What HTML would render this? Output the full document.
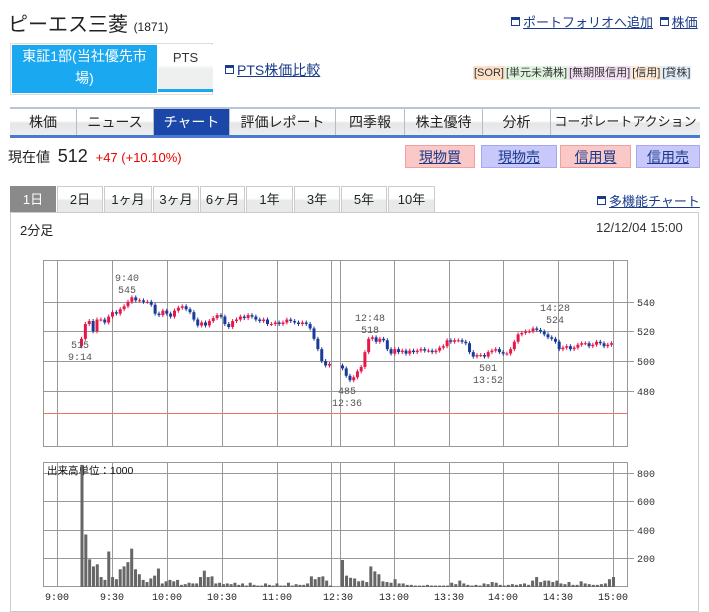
<!DOCTYPE html>
<html><head><meta charset="utf-8"><style>
body{margin:0;width:709px;height:605px;overflow:hidden;background:#fff;font-family:"Liberation Sans","Noto Sans CJK JP",sans-serif;color:#222;position:relative}
.a{position:absolute;white-space:nowrap}
a{color:#1a3a8a;text-decoration:underline}
.ic{display:inline-block;width:7px;height:7px;border:1px solid #1a3a8a;margin-right:3px;vertical-align:1px;background:linear-gradient(#1a3a8a 2px,#fff 2px)}
.nav{position:absolute;top:107px;left:10px;width:690px;height:26px;border-top:2px solid #b8c4d8;border-bottom:3px solid #4a7ad0;display:flex}
.nav div{flex:none;height:26px;line-height:26px;text-align:center;font-size:14px;background:linear-gradient(#fff 0,#fff 45%,#e4e6e8 55%,#eceeef 100%);border-right:1px solid #b8bcc4;box-sizing:border-box;color:#222;overflow:hidden;white-space:nowrap}
.nav .on{background:#1b48a8;color:#fff}
.btn{position:absolute;top:145px;height:23px;line-height:23px;text-align:center;font-size:14px;box-sizing:border-box}
.pk{background:#fbc8c8;border:1px solid #f0a0a0}
.lv{background:#c8c8fb;border:1px solid #a8a8f0}
.per{position:absolute;top:186px;left:10px;display:flex;height:26px}
.per div{height:26px;line-height:26px;text-align:center;font-size:13px;border:1px solid #ccc;border-bottom:none;box-sizing:border-box;background:linear-gradient(#fff 45%,#e8eaea 55%);margin-right:1px}
.per .on{background:#8a8a8a;color:#fff;border-color:#8a8a8a}
.tag{font-size:11px;padding:1px 1px}
</style></head><body>
<div class="a" style="left:8px;top:8px;font-size:20px">ピーエス三菱 <span style="font-size:12px">(1871)</span></div>
<div class="a" style="left:511px;top:12px;font-size:13px"><span class="ic"></span><a>ポートフォリオへ追加</a> <span class="ic" style="margin-left:3px"></span><a>株価</a></div>
<div class="a" style="left:10px;top:43px;width:201px;height:50px;border:1px solid #ddd"></div>
<div class="a" style="left:12px;top:45px;width:145px;height:48px;background:#1aa8f0;color:#fff;font-size:14px;text-align:center;line-height:22px;white-space:normal">東証1部(当社優先市<br>場)</div>
<div class="a" style="left:158px;top:45px;width:55px;height:44px;background:linear-gradient(#fff 45%,#eef0f0 55%);border-bottom:3px solid #1aa8f0;font-size:13px;text-align:center;line-height:26px;color:#333">PTS</div>
<div class="a" style="left:225px;top:60px;font-size:14px"><span class="ic"></span><a>PTS株価比較</a></div>
<div class="a" style="left:473px;top:63px;color:#333"><span class="tag" style="background:#fde0c8">[SOR]</span><span class="tag" style="background:#e0f4e0">[単元未満株]</span><span class="tag" style="background:#f4e0f4">[無期限信用]</span><span class="tag" style="background:#fde8d8">[信用]</span><span class="tag" style="background:#e0ecf8">[貸株]</span></div>
<div class="nav">
<div style="width:67px">株価</div><div style="width:77px">ニュース</div><div class="on" style="width:76px">チャート</div><div style="width:106px">評価レポート</div><div style="width:69px">四季報</div><div style="width:78px">株主優待</div><div style="width:68px">分析</div><div style="width:149px;border-right:none;font-size:13px">コーポレートアクション</div>
</div>
<div class="a" style="left:8px;top:146px;font-size:14px">現在値&nbsp; <span style="font-size:18px">512</span>&nbsp; <span style="color:#e00;font-size:13px">+47 (+10.10%)</span></div>
<div class="btn pk" style="left:405px;width:70px"><a>現物買</a></div>
<div class="btn lv" style="left:481px;width:76px"><a>現物売</a></div>
<div class="btn pk" style="left:560px;width:71px"><a>信用買</a></div>
<div class="btn lv" style="left:636px;width:64px"><a>信用売</a></div>
<div class="per"><div class="on" style="width:46px">1日</div><div style="width:46px">2日</div><div style="width:48px">1ヶ月</div><div style="width:46px">3ヶ月</div><div style="width:45px">6ヶ月</div><div style="width:47px">1年</div><div style="width:46px">3年</div><div style="width:46px">5年</div><div style="width:47px">10年</div></div>
<div class="a" style="left:597px;top:191px;font-size:13px"><span class="ic"></span><a>多機能チャート</a></div>
<div class="a" style="left:10px;top:212px;width:689px;height:400px;border:1px solid #ccc;box-sizing:border-box"></div>
<div class="a" style="left:20px;top:220px;font-size:13px">2分足</div>
<div class="a" style="left:596px;top:220px;font-size:13px;color:#333">12/12/04 15:00</div>
<svg class="a" style="left:0;top:0" width="709" height="605" id="s"></svg>
<script>
var s=document.getElementById('s'),h='';
function L(x1,y1,x2,y2,c,w){h+='<line x1="'+x1+'" y1="'+y1+'" x2="'+x2+'" y2="'+y2+'" stroke="'+c+'" stroke-width="'+(w||1)+'"/>';}
function T(x,y,t,a){h+='<text x="'+x+'" y="'+y+'" font-size="10" fill="'+(a||'#555')+'" font-family="Liberation Mono,monospace" text-anchor="middle">'+t+'</text>';}
var gx=[57,112,167,222,277,331,340,394,449,503,558,613];
h+='<rect x="43.5" y="260.5" width="584" height="186" fill="#fff" stroke="#999"/>';
[302,331,361,391].forEach(function(y){L(43,y+.5,634,y+.5,'#999')});
L(43,413.5,627,413.5,'#f07060');
gx.forEach(function(x){L(x+.5,260,x+.5,447,'#999')});
[[540,302],[520,331],[500,361],[480,391]].forEach(function(a){h+='<text x="637" y="'+(a[1]+4)+'" font-size="10" fill="#333" font-family="Liberation Mono,monospace">'+a[0]+'</text>'});
h+='<rect x="43.5" y="462.5" width="584" height="124" fill="#fff" stroke="#999"/>';
[473,501,530,558].forEach(function(y){L(43,y+.5,634,y+.5,'#999')});
gx.forEach(function(x){L(x+.5,462,x+.5,587,'#999')});
[[800,473],[600,501],[400,530],[200,558]].forEach(function(a){h+='<text x="637" y="'+(a[1]+4)+'" font-size="10" fill="#333" font-family="Liberation Mono,monospace">'+a[0]+'</text>'});
var lab=['9:00','9:30','10:00','10:30','11:00','12:30','13:00','13:30','14:00','14:30','15:00'],lx=[57,112,167,222,277,338,394,449,503,558,613];
lab.forEach(function(t,i){T(lx[i],600,t,'#222')});
h+='<text x="47" y="474" font-size="10.5" fill="#111" font-family="Liberation Sans,Noto Sans CJK JP,sans-serif">出来高単位：1000</text>';
var m=[515,525,527,520,528,528,526,530,533,532,535,537,540,543,541,541,540,540,538,532,531,534,532,530,534,536,537,535,533,528,524,526,524,527,529,531,530,525,523,527,528,530,529,531,530,528,527,528,525,525,526,525,526,528,527,526,525,526,525,522,515,508,500,497,498];
var p=[495,490,487,489,493,496,506,515,516,513,515,514,508,505,508,506,507,505,507,506,507,508,507,507,506,507,509,510,514,513,514,514,513,512,506,503,504,504,503,506,507,508,506,505,505,508,513,518,519,520,520,522,521,520,518,516,515,513,508,509,510,508,509,511,512,512,510,511,513,512,510,511,512];
var vm=[860,370,195,145,160,70,50,250,70,55,125,145,175,270,125,90,50,35,60,80,130,25,40,50,40,50,15,20,30,25,25,70,115,70,75,25,30,20,25,20,30,15,25,10,30,15,10,10,25,15,10,25,10,10,30,10,20,15,15,25,75,55,70,75,45,10];
var vp=[190,80,65,60,40,45,35,145,110,90,40,35,30,55,25,25,15,15,10,10,10,15,10,10,10,10,10,30,20,45,25,15,10,15,10,25,20,35,30,15,10,15,20,15,20,25,15,45,70,35,45,45,35,45,25,20,35,15,15,40,25,20,15,15,20,25,55,70];
function Y(v){return 361-(v-500)*1.48}
function draw(arr,x0,x1,o0){var o=o0,st=(x1-x0)/(arr.length-1);arr.forEach(function(c,i){var x=x0+i*st;var up=c>=o;var col=up?'#e8174a':'#1a3a9a';var y1=Y(Math.max(o,c)),y2=Y(Math.min(o,c));L(x+1.5,y1-2,x+1.5,y2+2,col);h+='<rect x="'+x+'" y="'+y1+'" width="3" height="'+Math.max(1,y2-y1)+'" fill="'+col+'"/>';o=c;});}
draw(m,80,328,510);draw(p,341,610,497);
function vol(arr,x0,x1){var st=(x1-x0)/(arr.length-1);arr.forEach(function(v,i){var x=x0+i*st,hh=v*0.142;h+='<rect x="'+x+'" y="'+(587-hh)+'" width="3" height="'+hh+'" fill="#666"/>';});}
vol(vm,80.5,329);vol(vp,341,612);
T(80,348,'515');T(80,360,'9:14');T(127,281,'9:40');T(127,293,'545');T(370,321,'12:48');T(370,333,'518');T(347,394,'485');T(347,406,'12:36');T(488,371,'501');T(488,383,'13:52');T(555,311,'14:28');T(555,323,'524');
s.innerHTML=h;
</script>
</body></html>
